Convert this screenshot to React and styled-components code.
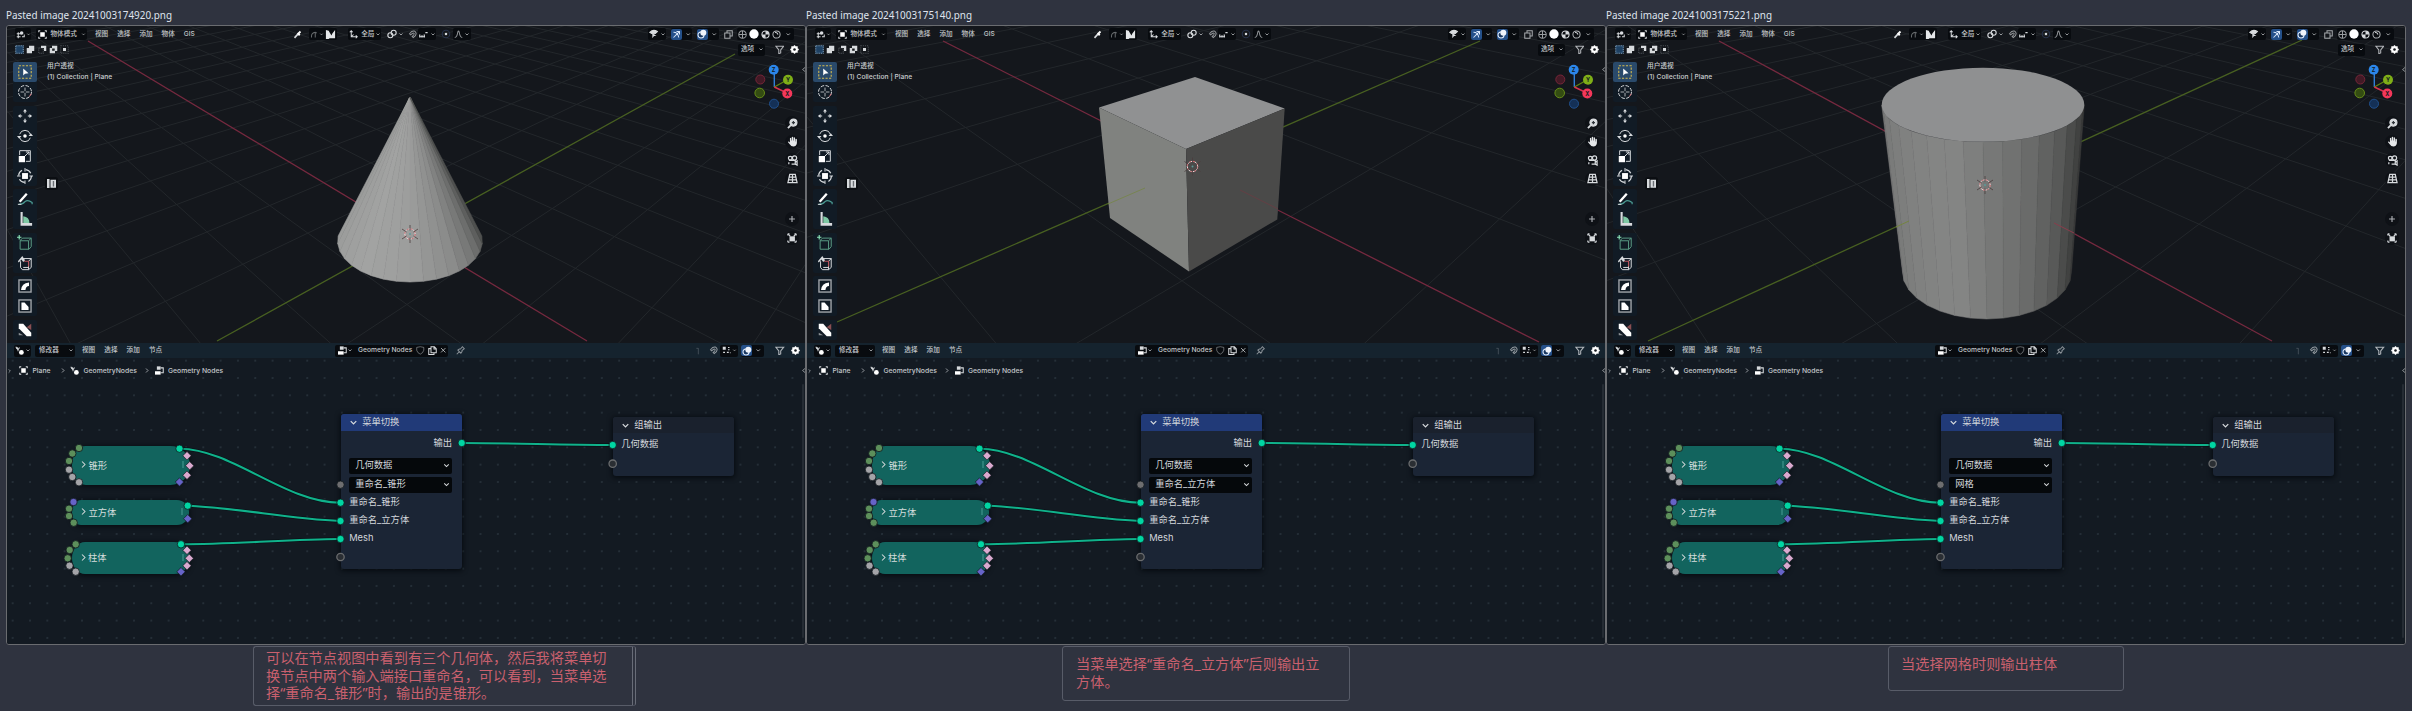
import React from "react";
import styled, { createGlobalStyle } from "styled-components";

const Global = createGlobalStyle`
  body { margin: 0; background: #2f333f; }
  * { box-sizing: border-box; }
`;

const UI = `Inter, "Noto Sans CJK SC", sans-serif`;

const Page = styled.main`
  display: flex;
  width: 2412px;
  height: 711px;
  padding-left: 6px;
  overflow: hidden;
  background: #2f333f;
  font-family: ${UI};
`;
const Column = styled.section`
  display: flex;
  flex-direction: column;
  width: 800px;
  flex: none;
`;
const Title = styled.h2`
  margin: 0;
  height: 25px;
  padding-top: 5px;
  font: 400 9.92px/20px "Noto Sans", sans-serif;
  color: #dfe3ee;
  white-space: nowrap;
`;
const Frame = styled.div`
  display: flex;
  flex-direction: column;
  width: 800px;
  height: 620px;
  border: 1px solid #6a6c70;
  border-radius: 3px;
  overflow: hidden;
  background: #131820;
`;
const Note = styled.p`
  margin: 1px 0 0 ${(p) => p.$left}px;
  width: ${(p) => p.$width}px;
  height: ${(p) => p.$height}px;
  padding: ${(p) => p.$pad};
  border: 1px solid #585c68;
  ${(p) => p.$scroll && "border-right: 4px double #686c77;"}
  border-radius: 3px;
  font: 400 14.2px/17.7px "Noto Sans", "Noto Sans CJK SC", sans-serif;
  color: #c9606e;
  white-space: pre;
`;

/* ---------- 3D viewport ---------- */
const Viewport = styled.div`
  position: relative;
  display: flex;
  flex-direction: column;
  height: 317px;
  flex: none;
  background: #14171c;
`;
const SceneSvg = styled.svg`
  position: absolute;
  inset: 0;
`;
const Bar = styled.div`
  position: relative;
  display: flex;
  align-items: center;
  height: ${(p) => p.$h}px;
  padding-left: ${(p) => p.$start}px;
  background: ${(p) => p.$bg || "transparent"};
  flex: none;
`;
const Slot = styled.span`
  display: flex;
  align-items: center;
  justify-content: ${(p) => (p.$text ? "flex-start" : "center")};
  width: ${(p) => p.$w}px;
  height: 11px;
  margin-left: ${(p) => p.$gap || 0}px;
  flex: none;
  background: ${(p) => p.$bg || "transparent"};
  border-radius: 2px;
  color: ${(p) => p.$color || "#c3c7cb"};
  font-size: ${(p) => p.$size || 6.6}px;
  font-weight: 500;
  line-height: 11px;
  white-space: nowrap;
`;
const Group = styled.span`
  display: flex;
  align-items: center;
  height: 12px;
  width: ${(p) => p.$w}px;
  margin-left: ${(p) => p.$gap || 0}px;
  padding-left: ${(p) => p.$pad || 0}px;
  background: #080b0f;
  border-radius: 2px;
  flex: none;
`;
const Body = styled.div`
  position: relative;
  display: flex;
  justify-content: space-between;
  flex: 1;
  padding: 5px 5px 0 6px;
`;
const Left = styled.div`
  display: flex;
  gap: 10px;
`;
const Tools = styled.div`
  display: flex;
  flex-direction: column;
  gap: 3.6px;
`;
const ToolGroup = styled.div`
  display: flex;
  flex-direction: column;
  width: 24px;
  background: #111b25;
  border-radius: 2px;
`;
const Tool = styled.div`
  display: flex;
  align-items: center;
  justify-content: center;
  height: 20px;
  border-radius: 2px;
  background: ${(p) => (p.$on ? "#2a4a6b" : "transparent")};
`;
const Info = styled.div`
  display: flex;
  flex-direction: column;
  align-items: flex-start;
  margin-top: -1px;
  font-size: 6.7px;
  line-height: 11px;
  font-weight: 500;
  color: #c9cccf;
  white-space: nowrap;
`;
const AssetShelf = styled.div`
  display: flex;
  align-items: center;
  justify-content: center;
  width: 13px;
  height: 13px;
  margin: 94px 0 0 -2px;
  background: #0b0e12;
  border-radius: 3px;
`;
const Right = styled.div`
  display: flex;
  flex-direction: column;
  align-items: flex-end;
  width: 56px;
`;
const NavStack = styled.div`
  display: flex;
  flex-direction: column;
  width: 14px;
  gap: 4.6px;
  margin: 4px 1px 0 0;
`;
const NavButton = styled.div`
  display: flex;
  align-items: center;
  justify-content: center;
  height: 14px;
  margin-top: ${(p) => p.$gap || 0}px;
  border-radius: 7px;
  background: #0e1116;
`;

/* ---------- node editor ---------- */
const Canvas = styled.div`
  position: relative;
  flex: 1;
  background-color: #131a22;
  background-image: radial-gradient(circle at 1px 1px, #252f38 0.7px, transparent 1px);
  background-size: 17.33px 17.33px;
  background-position: 4.7px 1.7px;
`;
const Wires = styled.svg`
  position: absolute;
  inset: 0;
`;
const Crumbs = styled.div`
  position: relative;
  display: flex;
  align-items: center;
  height: 25px;
`;
const Scroll = styled.div`
  position: absolute;
  right: 1px;
  top: 26px;
  bottom: 6px;
  width: 2px;
  border-radius: 1px;
  background: #242b33;
`;
const Node = styled.div`
  position: absolute;
  left: ${(p) => p.$x}px;
  top: ${(p) => p.$y}px;
  width: ${(p) => p.$w}px;
  height: ${(p) => p.$h}px;
  border-radius: 3px;
  background: #1b2535;
  box-shadow: 0 1px 5px 1px rgba(3, 7, 11, 0.75);
  color: #d3d7dc;
  font-size: 9.3px;
  line-height: 18.2px;
  white-space: nowrap;
`;
const NodeHead = styled.div`
  display: flex;
  align-items: center;
  gap: 3px;
  height: ${(p) => p.$h}px;
  padding: 0 0 0 7.5px;
  border-radius: 3px 3px 0 0;
  background: ${(p) => p.$bg};
`;
const Output = styled.div`
  padding: 3px 10px 0 0;
  text-align: right;
`;
const Select = styled.div`
  display: flex;
  align-items: center;
  justify-content: space-between;
  height: 16px;
  margin: ${(p) => p.$mt}px 9.5px 0 8.5px;
  padding: 0 1px 1px 6px;
  border-radius: 2px;
  background: #05080b;
`;
const Inputs = styled.div`
  padding: ${(p) => p.$pt}px 0 0 8.5px;
`;
const Pill = styled.div`
  position: absolute;
  left: ${(p) => p.$x}px;
  top: ${(p) => p.$y}px;
  width: ${(p) => p.$w}px;
  height: ${(p) => p.$h}px;
  display: flex;
  align-items: center;
  gap: 0.5px;
  padding: 0 6px 2px 7px;
  border-radius: ${(p) => p.$r};
  background: #12645e;
  box-shadow: 0 1px 5px 1px rgba(3, 7, 11, 0.7);
  color: #d5dedd;
  font-size: 9.3px;
  white-space: nowrap;
`;
const Grip = styled.i`
  width: 2px;
  height: 7px;
  margin-left: auto;
  background: #2d8079;
`;

/* ---------- icons, drawn on a 12 x 12 field ---------- */
const W = "#d8dbde";
const icons = {
  chev: <path d="M3 4.5 6 7.5 9 4.5" />,
  right: <path d="M4 2 8 6 4 10" />,
  view: <g><path d="M1 5H7M1 9H6M3 3V11" /><circle cx="7.5" cy="4" r="2.4" fill={W} stroke="none" /><path d="M8 9H11V6" /></g>,
  object: <g><rect x="3" y="3" width="6" height="6" fill="#fff" stroke="none" /><path d="M1 3V1H3M9 1H11V3M11 9V11H9M3 11H1V9" /></g>,
  dropper: <g><path d="M2 10.5 6.5 5.5" strokeWidth="2.2" /><path d="M6 4 9 7M7.5 4.5 10 2" strokeWidth="2.6" stroke="#fff" /></g>,
  hook: <path d="M2 10V8Q2 4 7 3L9 4M7 4V10" opacity=".45" />,
  snapN: <path d="M1 1V11H4L5 10H11V1L8 5 7 7 4 2Z" fill="#e4e6e8" stroke="none" />,
  axes: <path d="M3 1V9H11M1 3 3 1 5 3M9 7 11 9 9 11M3 9 6 6" />,
  link: <g><circle cx="4" cy="7.5" r="3" /><circle cx="8" cy="4.5" r="3" /></g>,
  magnet: <path d="M2 5 5 2Q9 0 10.5 3.5 12 7 7 10L5.5 8.5Q9 6 8 4.4 7 3 3.5 6.5Z" opacity=".65" />,
  ruler: <path d="M1 9H8M1 6V10M4 7V10M7 6V10M10 3V4M8.5 3.5H11.5" strokeWidth="1.6" />,
  dot: <g><circle cx="6" cy="6" r="4.5" stroke="#26314a" /><circle cx="6" cy="6" r="1.5" fill={W} stroke="none" /></g>,
  falloff: <path d="M1 10Q4 10 5 3 6 0 7 3 8 10 11 10" opacity=".65" />,
  eye: <g><path d="M1 4Q5 0 10 3L8 5Q5 7 1 4Z" fill={W} /><path d="M4 5V11L6 8.5H9Z" fill={W} stroke="none" /></g>,
  gizmo: <path d="M2 3Q8 3 9 10M2 10 9.5 2.5M6 2H10V6" stroke="#d8e6fa" />,
  overlay: <g><circle cx="4.8" cy="7.2" r="3.6" fill="#17365f" stroke="#dbe8fa" /><circle cx="7.6" cy="4.6" r="3.6" fill="#eef3fb" stroke="none" /></g>,
  xray: <path d="M1 4H8V11H1ZM4 4V1H11V8H8" opacity=".75" />,
  wire: <path d="M6 1A5 5 0 1 0 6 11 5 5 0 1 0 6 1M6 1V11M1 6H11" opacity=".7" />,
  solid: <circle cx="6" cy="6" r="5.6" fill="#fff" stroke="none" />,
  material: <g><circle cx="6" cy="6" r="4.8" /><path d="M6 1.2V6H10.8A5 5 0 0 0 6 1.2ZM6 6H1.2A5 5 0 0 0 6 10.8Z" fill={W} stroke="none" /></g>,
  render: <g><circle cx="6" cy="6" r="4.8" opacity=".8" /><path d="M4 3Q7 3 8 6" /></g>,
  funnel: <path d="M1 1.5H11L7.2 6.2V10L4.8 11V6.2Z" opacity=".8" />,
  gear: <g><circle cx="6" cy="6" r="3.1" stroke="#fff" strokeWidth="3" /><path d="M6 .3V11.7M.3 6H11.7M2 2 10 10M10 2 2 10" stroke="#fff" strokeWidth="1.8" /><circle cx="6" cy="6" r="1.7" fill="#14171c" stroke="none" /></g>,
  selNew: <rect x="1" y="1" width="10" height="10" fill="#1f4163" stroke="#7ca0bf" strokeDasharray="1.4 1" />,
  selAdd: <path d="M1 4H4V1H11V8H8V11H1Z" fill={W} stroke="none" />,
  selSub: <g><path d="M1 4H7V11H1Z" stroke="#50555a" strokeDasharray="1.4 1" /><path d="M4 1H11V8H8V4H4Z" fill={W} stroke="none" /></g>,
  selXor: <path d="M1 4H4V1H11V8H8V11H1ZM4.2 4.5V7.6H7.6V4.5Z" fill={W} fillRule="evenodd" stroke="none" />,
  selAnd: <g><rect x="1" y="1" width="10" height="10" stroke="#4c5156" strokeDasharray="1.4 1.4" /><rect x="4" y="4" width="4" height="4" fill={W} stroke="none" /></g>,
  zoom: <g><circle cx="7" cy="5" r="3.8" fill={W} /><path d="M4.2 7.8 1 11" strokeWidth="2" /><path d="M5.3 5H8.7M7 3.3V6.7" stroke="#30353a" /></g>,
  hand: <path d="M3.2 6V2.4Q4.2 1.6 4.7 2.6V5H5.2V1.2Q6.2.3 6.8 1.4V5H7.3V1.8Q8.2 1 8.8 2V6H9.2V3.5Q10.2 2.6 10.8 3.7V8Q10 11.5 7 11.5 4.4 11.5 3 9L.9 6.5Q1.5 5.2 3.2 7Z" fill="#e5e7e9" stroke="none" />,
  camera: <g><circle cx="3.5" cy="3.4" r="2" /><circle cx="8.2" cy="3.2" r="2.3" /><path d="M2 6H9V10H5M9 8 11 6.5V11L9 10M2 8V10" /></g>,
  persp: <path d="M3 1.5H9L11 10.5H1ZM2.4 4.5H9.6M1.7 7.5H10.3M6 1.5V10.5" />,
  plus: <path d="M6 2.5V9.5M2.5 6H9.5" opacity=".8" />,
  local: <g><path d="M1 1H3M1 1V3M11 1H9M11 1V3M1 11H3M1 11V9M11 11H9M11 11V9M2 2 4 4M10 2 8 4" /><rect x="3" y="4" width="6.5" height="6" fill={W} stroke="none" /></g>,
  asset: <g><path d="M0 0H3.4V12H0ZM4.6 1H12V11.5H4.6Z" fill={W} stroke="none" /><path d="M8.6 2.5V10" stroke="#6a6f74" strokeWidth="1.8" /></g>,
  modifier: <g><path d="M1 1 4 5 6 2M4 5V7" /><circle cx="8.5" cy="8.5" r="3.2" fill="#fff" stroke="none" /><circle cx="3" cy="3" r="1.3" fill={W} stroke="none" /></g>,
  nodes: <g><rect x="2.5" y="0.5" width="5" height="4.5" fill={W} stroke="none" /><rect x="0" y="7" width="7.5" height="4.5" fill="#fff" stroke="none" /><path d="M7.5 2.5H11V9H7.5" /></g>,
  shield: <path d="M1 2Q6 0 11 2V6Q10 10 6 11.5 2 10 1 6Z" opacity=".45" />,
  copy: <path d="M4 1H8.5L11 3.5V9H4ZM4 3.5H1V11.5H8V9M8 1V4H11" />,
  close: <path d="M2 2 10 10M10 2 2 10" />,
  pin: <path d="M1 11 4.5 7.5M2.5 5.5 6.5 9.5 8 7.5 8 6 11 3.5 8.5 1 6 4 4.5 4Z" opacity=".6" />,
  up: <path d="M8 11V2H5" opacity=".25" />,
  snapGrid: <g><rect x="1" y="1" width="4" height="4" fill={W} stroke="none" /><path d="M1.5 8.5H4M6.5 8.5H9M8 2H10M8 5H10M10.5 9H11.5" strokeWidth="1.6" /></g>,
};
const tools = {
  select: <g><rect x="2" y="2" width="14" height="14" stroke="#d5ba4f" strokeDasharray="2.4 1.6" strokeWidth="1.2" /><path d="M7 5V13L9 11 13 10.5Z" fill="#fff" stroke="none" /></g>,
  cursor: <g><circle cx="9" cy="9" r="7.3" strokeDasharray="4 1.7" /><path d="M9 4V8M9 10V14M4 9H8M10 9H14" opacity=".8" /><path d="M14 14 16 11" stroke="#d16b72" /></g>,
  move: <g><path d="M9 5.8V3M9 12.2V15M5.8 9H3M12.2 9H15" strokeWidth="1.3" /><path d="M9 1 11.2 4H6.8ZM9 17 11.2 14H6.8ZM1 9 4 6.8V11.2ZM17 9 14 6.8V11.2Z" fill={W} stroke="none" /></g>,
  rotate: <g><path d="M3 7A6.3 6.3 0 0 1 15 7M15 11A6.3 6.3 0 0 1 3 11" /><circle cx="9" cy="9" r="2" fill="#fff" stroke="none" /><path d="M0 9H5L2.5 12ZM13 9H18L15.5 6Z" fill={W} stroke="none" /></g>,
  scale: <g><path d="M3 8V3H15V15H10M9 9 13.5 4.5M10 4.5H13.5V8" /><rect x="2" y="9" width="7" height="7" fill="#fff" stroke="none" /></g>,
  transform: <g><circle cx="9" cy="9" r="7.2" strokeDasharray="7 4.3" strokeWidth="1.3" /><rect x="5.7" y="5.7" width="6.6" height="6.6" fill="#fff" stroke="none" /><path d="M9 0V4M9 14V18M0 9H4M14 9H18" /></g>,
  annotate: <g><path d="M3 12 11 3" stroke="#fff" strokeWidth="2.6" /><path d="M2 15Q7 15 9 12 12 9 17 13V15" stroke="#4a9a92" strokeWidth="1.4" /><path d="M1 15H5" /></g>,
  measure: <g><path d="M4 1H6.4V13.6H17V16.5H4Z" fill={W} stroke="none" /><path d="M7 6Q14 7 14 13.5H7Z" fill="#7fc9a5" stroke="none" /></g>,
  cube: <g><path d="M3.5 6 6.5 3.5H16V13L13.5 16H3.5ZM3.5 6.5H13V16M13 6.5 16 3.5" stroke="#5b9e86" /><path d="M2.5 0V5M0 2.5H5" stroke="#8be3b7" strokeWidth="1.3" /></g>,
  knife: <g><path d="M4 7V14L6 16.5H13V7M7 14H13M6 4H16V14L13 16.5M13 7 16 4" /><path d="M8 7H13V13" stroke="#b5535c" strokeWidth="1.3" /><path d="M1 7 6 1 9 6 7 8 5 5 2 8.5Z" fill={W} stroke="none" /></g>,
  bevel: <g><rect x="2.2" y="2.2" width="13.6" height="13.6" strokeWidth="1.5" opacity=".75" /><path d="M4.5 13.5Q5 6 13.5 5V9Q10 9 9.5 13.5Z" fill="#fff" stroke="none" /></g>,
  inset: <g><rect x="2.2" y="2.2" width="13.6" height="13.6" strokeWidth="1.5" opacity=".75" /><path d="M5 5H8.5L13 10V13.5H5Z" fill="#fff" stroke="none" /></g>,
  swatch: <g><path d="M2 2H7L16 12V16H11L2 7Z" fill="#fff" stroke="none" /><path d="M11 6 16 2V9Z" fill="#8a4e52" stroke="none" /><path d="M2 12 7 15H2Z" fill="#8a8f93" stroke="none" /></g>,
};

const Drawing = ({ set = icons, box = 12, name, s = 8 }) => (
  <svg width={s} height={s} viewBox={`0 0 ${box} ${box}`} fill="none" stroke={W} strokeWidth={box === 12 ? 1.35 : 1.1}>
    {set[name]}
  </svg>
);

/* One cell of a header bar: an icon or a word. */
const Item = ({ i, t, s, w, gap, bg, color, size }) => (
  <Slot $w={w} $gap={gap} $bg={bg} $color={color} $size={size} $text={!!t}>
    {t || <Drawing name={i} s={s || (i === "chev" ? 6.5 : 9)} />}
  </Slot>
);

const blue = "#24508a";
const ViewHeader = () => (
  <Bar $h={16} $start={8}>
    <Group $w={16}><Item i="view" w={11} /><Item i="chev" w={5} /></Group>
    <Group $gap={5} $w={51}><Item i="object" w={12} /><Item t="物体模式" w={30} gap={2.5} /><Item i="chev" w={5} /></Group>
    {["视图", "选择", "添加", "物体", "GIS"].map((t, n) => (
      <Item key={t} t={t} w={14} gap={n ? 8.2 : 8} />
    ))}
    <Item i="dropper" w={12} gap={93.5} />
    <Group $gap={6} $w={28}><Item i="hook" w={10} /><Item i="chev" w={5} /><Item i="snapN" w={11} s={11} gap={1} /></Group>
    <Group $gap={11} $w={33}><Item i="axes" w={11} /><Item t="全局" w={14} gap={2} /><Item i="chev" w={6} /></Group>
    <Item i="link" w={12} gap={4.5} s={10} /><Item i="chev" w={6} />
    <Item i="magnet" w={11} gap={3} />
    <Group $gap={0} $w={18}><Item i="ruler" w={12} /><Item i="chev" w={6} /></Group>
    <Item i="dot" w={10} gap={5} s={10} />
    <Group $gap={2} $w={18}><Item i="falloff" w={11} /><Item i="chev" w={6} /></Group>
    <Group $gap={177} $w={18}><Item i="eye" w={12} s={10} /><Item i="chev" w={6} /></Group>
    <Group $gap={5} $w={21}><Item i="gizmo" w={11} bg={blue} /><Item i="chev" w={8} gap={2} /></Group>
    <Group $gap={5} $w={22}><Item i="overlay" w={11} bg={blue} s={10} /><Item i="chev" w={8} gap={2} /></Group>
    <Item i="xray" w={11} gap={4} />
    <Group $gap={3} $w={57}>
      <Item i="wire" w={12} /><Item i="solid" w={11} s={10} /><Item i="material" w={11} /><Item i="render" w={12} /><Item i="chev" w={10} />
    </Group>
  </Bar>
);

const Settings = () => (
  <Bar $h={15} $start={7}>
    {["selNew", "selAdd", "selSub", "selXor", "selAnd"].map((n) => <Item key={n} i={n} w={11.3} />)}
    <Group $gap={667.5} $w={27} $pad={3}><Item t="选项" w={17} /><Item i="chev" w={6} /></Group>
    <Item i="funnel" w={12} gap={8.5} s={9.5} /><Item i="gear" w={12} gap={3} s={9} />
  </Bar>
);

const toolGroups = [["select", "cursor"], ["move", "rotate", "scale", "transform"], ["annotate", "measure"], ["cube", "knife"], ["bevel", "inset"], ["swatch"]];

const GizmoLetter = ({ x, y, c, t }) => (
  <g>
    <circle cx={x} cy={y} r="5" fill={c} />
    <text x={x} y={y + 2} textAnchor="middle" fontSize="5.5" fontWeight="700" fontFamily="Inter, sans-serif" fill="#141a20">{t}</text>
  </g>
);
const Gizmo = () => (
  <svg width="50" height="50" viewBox="751 63 50 50" fill="none">
    <path d="M775.3 88V75" stroke="#2f7fd8" strokeWidth="1.4" />
    <path d="M775.3 88 788 81" stroke="#5f8513" strokeWidth="1.4" />
    <path d="M775.3 88 788 94" stroke="#d8324e" strokeWidth="1.4" />
    <circle cx="761.3" cy="80.5" r="4.5" fill="#421a26" stroke="#762638" />
    <circle cx="760.7" cy="94" r="4.8" fill="#344c12" stroke="#668c18" />
    <circle cx="775" cy="104.7" r="4.5" fill="#143056" stroke="#1f4f8c" />
    <GizmoLetter x={774.7} y={70.7} c="#2b86ea" t="Z" />
    <GizmoLetter x={789} y={80.7} c="#7fae17" t="Y" />
    <GizmoLetter x={788.3} y={94.5} c="#f5375a" t="X" />
  </svg>
);

/* ---------- scenes ---------- */
const gridPath = (vp, x0, step) => {
  let d = "";
  for (let k = -40; k <= 40; k++) if (k) d += `M${vp[0]} ${vp[1]}L${x0 + k * step} 341 ${vp[0] + (x0 + k * step - vp[0]) * 3} ${vp[1] + (341 - vp[1]) * 3}`;
  return d;
};
const mix = (a, b, t) => a.map((v, i) => Math.round(v + (b[i] - v) * t));
const ramp = (stops, t) => {
  let n = stops.findIndex((s) => s[0] >= t);
  if (n < 1) n = n === 0 ? 1 : stops.length - 1;
  const [a, b] = [stops[n - 1], stops[n]];
  return `rgb(${mix(a[1], b[1], (t - a[0]) / (b[0] - a[0]))})`;
};
const g = (v) => [v, v + 1, v];

const Cone = () => {
  const n = 18, start = 187, end = -7;
  const stops = [[0, g(154)], [0.3, g(162)], [0.5, g(156)], [0.7, g(138)], [0.85, g(112)], [1, g(72)]];
  const at = (k) => {
    const a = ((start + ((end - start) * k) / n) * Math.PI) / 180;
    return [410 + 72.4 * Math.cos(a), 241 + 41 * Math.sin(a)];
  };
  return [...Array(n)].map((_, k) => {
    const a = at(k), b = at(k + 1), c = ramp(stops, (k + 0.5) / n);
    return <path key={k} d={`M410 97L${a}L${b}Z`} fill={c} stroke={c} strokeWidth=".6" strokeLinejoin="round" />;
  });
};
const Cube = () => (
  <g>
    <path d="M299 107.5 395 77 484.7 108.5 386 149Z" fill="#909192" />
    <path d="M299 107.5 386 149 389 271.5 310 218Z" fill="#80827f" />
    <path d="M386 149 484.7 108.5 477.3 219.5 389 271.5Z" fill="#4a4a49" />
  </g>
);
const Cylinder = () => {
  const n = 16;
  const stops = [[0, g(116)], [0.2, g(128)], [0.4, g(133)], [0.52, g(120)], [0.66, g(106)], [0.78, g(88)], [0.88, g(68)], [1, g(54)]];
  const pt = (k, cx, cy, rx, ry) => {
    const a = Math.PI * (1 - k / n);
    return [cx + rx * Math.cos(a), cy + ry * Math.sin(a)];
  };
  return (
    <g>
      {[...Array(n)].map((_, k) => {
        const c = ramp(stops, (k + 0.5) / n);
        const p = [pt(k, 383, 105, 101.3, 37), pt(k + 1, 383, 105, 101.3, 37), pt(k + 1, 387, 272, 84.5, 47), pt(k, 387, 272, 84.5, 47)];
        return <path key={k} d={`M${p[0]}L${p[1]}L${p[2]}L${p[3]}Z`} fill={c} stroke={c} strokeWidth=".5" strokeLinejoin="round" />;
      })}
      <ellipse cx="383" cy="104.7" rx="101.3" ry="37" fill="#8f9091" />
    </g>
  );
};
const Cursor3D = ({ x, y }) => (
  <g transform={`translate(${x} ${y})`} fill="none">
    <circle r="5.2" stroke="#e9dcdc" strokeWidth="1" />
    <circle r="5.2" stroke="#c0555c" strokeWidth="1" strokeDasharray="2 2.08" />
    <path d="M0-9V-3.5M0 3.5V9M-8-5-3.5-2M3.5 2 8 5M-8 5-3.5 2M3.5-2 8-5" stroke="#4a3c3e" strokeWidth=".8" />
    <circle r="1" fill="#5d9a98" />
  </g>
);

const scenes = {
  cone: {
    vr: [-190, -126], vg: [1064, -129], r0: 587, rs: 129.5, g0: 217, gs: 134.5,
    red: "M88 41 587 341", green: "M217 341 735 54", cursor: [410, 234], Shape: Cone, ghost: null,
  },
  cube: {
    vr: [-201, -132], vg: [1085, -136], r0: 740, rs: 273, g0: -6, gs: 286.5,
    red: "M143 41 739 342", green: "M37 322 680 41", cursor: [392.5, 166.5], Shape: Cube,
    ghost: <g strokeWidth="1"><path d="M308 204 345 188" stroke="#74843f" opacity=".7" /><path d="M440 190 478 209" stroke="#6b3c44" opacity=".8" /></g>,
  },
  cylinder: {
    vr: [-205, -135], vg: [1065, -127], r0: 672, rs: 188.5, g0: 48, gs: 198,
    red: "M119 41 672 341", green: "M48 341 702 40", cursor: [385, 185], Shape: Cylinder,
    ghost: <g strokeWidth="1"><path d="M296 227 309 221" stroke="#74843f" /><path d="M454 223 474 233" stroke="#8b3c4b" /></g>,
  },
};

const Scene = ({ kind }) => {
  const s = scenes[kind];
  return (
    <SceneSvg width="798" height="317" viewBox="7 26 798 317" fill="none">
      <path d={gridPath(s.vr, s.r0, s.rs) + gridPath(s.vg, s.g0, s.gs)} stroke="#23272b" strokeWidth="1" />
      <path d={s.red} stroke="#76293f" strokeWidth="1.3" />
      <path d={s.green} stroke="#486021" strokeWidth="1.3" />
      <s.Shape />
      {s.ghost}
      <Cursor3D x={s.cursor[0]} y={s.cursor[1]} />
      <path d="M805 67.5 802.5 69.5 805 71.5" stroke="#888c90" />
    </SceneSvg>
  );
};

/* ---------- node graph ---------- */
const GREEN = "#5d8f5b", GREY = "#a4a4a8", TEAL = "#00d6a3", PINK = "#d9a9cf", VIOLET = "#6663c7";
const sockets = [
  [79, 448, GREEN], [72.3, 453.5, GREEN], [69, 461, GREEN], [69, 469.7, GREY], [72.3, 477, GREY], [79, 482.3, GREY], [179.5, 448.7, TEAL],
  [73.5, 502, VIOLET], [69, 508.7, GREEN], [69, 516, GREEN], [73.7, 522.7, GREEN], [187.7, 505.7, TEAL],
  [75.7, 544.3, GREEN], [69.7, 550, GREEN], [67.7, 558.3, GREEN], [69.5, 565.7, GREY], [75.7, 571.7, GREY], [181, 544.3, TEAL],
  [340.5, 484.7, "#6e6e70"], [340.5, 502.7, TEAL], [340.5, 521, TEAL], [340.5, 539, TEAL], [461.7, 443, TEAL], [612.7, 445, TEAL],
];
const diamonds = [
  [187, 455.7, PINK], [189.7, 465.7, PINK], [187, 475.3, PINK], [179.5, 482, VIOLET], [187.7, 518.7, VIOLET],
  [187, 550.3, PINK], [189.3, 558.3, PINK], [187, 565.7, PINK], [181, 571.7, VIOLET],
];
const wirePaths = "M180 448.7C232 449 285 502.7 340 502.7M188 505.7C240 508 288 519 340 521M181 544.3C235 544 290 539.5 340 539M462 443C512 443 562 445 612 445";

const NodeGraph = ({ choice }) => (
  <>
    <Wires width="798" height="286" viewBox="7 358 798 286" fill="none">
      <path d={wirePaths} stroke="#0a1218" strokeWidth="3.4" />
      <path d={wirePaths} stroke="#10b28b" strokeWidth="2.1" />
    </Wires>
    <Pill $x={65} $y={88} $w={118} $h={39} $r="14px 20px 20px 14px / 20px"><Drawing name="right" s={9} />锥形<Grip /></Pill>
    <Pill $x={65} $y={142} $w={117} $h={25} $r="9px 12px 12px 9px / 12px"><Drawing name="right" s={9} />立方体<Grip /></Pill>
    <Pill $x={64.5} $y={184} $w={118} $h={32} $r="13px 16px 16px 13px / 16px"><Drawing name="right" s={9} />柱体<Grip /></Pill>
    <Node $x={333.7} $y={56} $w={121.3} $h={155}>
      <NodeHead $h={17} $bg="#213a78"><Drawing name="chev" s={11} />菜单切换</NodeHead>
      <Output>输出</Output>
      <Select $mt={5.8}>几何数据<Drawing name="chev" s={9} /></Select>
      <Select $mt={3}>{choice}<Drawing name="chev" s={9} /></Select>
      <Inputs $pt={0}>
        <div>重命名_锥形</div>
        <div>重命名_立方体</div>
        <div>Mesh</div>
      </Inputs>
    </Node>
    <Node $x={605.7} $y={59} $w={121} $h={59}>
      <NodeHead $h={16} $bg="#1a212d"><Drawing name="chev" s={11} />组输出</NodeHead>
      <Inputs $pt={2}>几何数据</Inputs>
    </Node>
    <Wires width="798" height="286" viewBox="7 358 798 286" fill="none">
      {sockets.map(([x, y, c], k) => <circle key={k} cx={x} cy={y} r="3.7" fill={c} stroke="#10181d" strokeWidth=".8" />)}
      {diamonds.map(([x, y, c], k) => <path key={k} d={`M${x} ${y - 4.2}l4.2 4.2-4.2 4.2-4.2-4.2z`} fill={c} stroke="#10181d" strokeWidth=".7" />)}
      {[[340.5, 557], [612.7, 463.7]].map(([x, y]) => <circle key={x} cx={x} cy={y} r="3.7" fill="#2a2e33" stroke="#6a6c6e" strokeWidth="1.3" />)}
      <path d="M805 368.5 802.5 370.5 805 372.5" stroke="#888c90" />
    </Wires>
  </>
);

const NodeHeader = () => (
  <Bar $h={15} $start={7} $bg="#15232e">
    <Group $w={17}><Item i="modifier" w={11} /><Item i="chev" w={6} /></Group>
    <Group $gap={4} $w={40} $pad={4}><Item t="修改器" w={29} /><Item i="chev" w={6} /></Group>
    {["视图", "选择", "添加", "节点"].map((t, n) => <Item key={t} t={t} w={14} gap={n ? 8.3 : 7} />)}
    <Group $gap={172.2} $w={113} $pad={2}>
      <Item i="nodes" w={10} /><Item i="chev" w={6} />
      <Item t="Geometry Nodes" w={56} gap={5} size={6.7} />
      <Item i="shield" w={11} gap={1} s={8.5} /><Item i="copy" w={11} gap={1} s={9} /><Item i="close" w={9} gap={1} s={6.5} />
    </Group>
    <Item i="pin" w={12} gap={6} s={9} />
    <Item i="up" w={8} gap={227} s={8} />
    <Item i="magnet" w={12} gap={6} />
    <Group $gap={1} $w={18}><Item i="snapGrid" w={12} s={9} /><Item i="chev" w={5} /></Group>
    <Group $gap={3} $w={23}><Item i="overlay" w={11} bg={blue} s={10} /><Item i="chev" w={9} gap={2} /></Group>
    <Item i="funnel" w={12} gap={10} s={9.5} /><Item i="gear" w={12} gap={3} s={9} />
  </Bar>
);

const Breadcrumbs = () => (
  <Crumbs>
    <Item i="right" w={5} s={6} />
    <Item i="object" w={10} gap={6.5} s={9} /><Item t="Plane" w={20} gap={4} size={6.8} />
    <Item i="right" w={6} gap={7} s={7} />
    <Item i="modifier" w={10} gap={4} s={9} /><Item t="GeometryNodes" w={54} gap={4} size={6.8} />
    <Item i="right" w={6} gap={6.5} s={7} />
    <Item i="nodes" w={10} gap={4} s={9} /><Item t="Geometry Nodes" w={56} gap={4} size={6.8} />
  </Crumbs>
);

const Screenshot = ({ kind, choice }) => (
  <Frame>
    <Viewport>
      <Scene kind={kind} />
      <ViewHeader />
      <Settings />
      <Body>
        <Left>
          <Tools>
            {toolGroups.map((names) => (
              <ToolGroup key={names[0]}>
                {names.map((n) => <Tool key={n} $on={n === "select"}><Drawing set={tools} box={18} name={n} s={16} /></Tool>)}
              </ToolGroup>
            ))}
          </Tools>
          <Info>
            <span>用户透视</span>
            <span>(1) Collection | Plane</span>
            <AssetShelf><Drawing name="asset" s={9} /></AssetShelf>
          </Info>
        </Left>
        <Right>
          <Gizmo />
          <NavStack>
            <NavButton><Drawing name="zoom" s={11} /></NavButton>
            <NavButton><Drawing name="hand" s={11} /></NavButton>
            <NavButton><Drawing name="camera" s={11} /></NavButton>
            <NavButton><Drawing name="persp" s={11} /></NavButton>
            <NavButton $gap={22}><Drawing name="plus" s={10} /></NavButton>
            <NavButton><Drawing name="local" s={10} /></NavButton>
          </NavStack>
        </Right>
      </Body>
    </Viewport>
    <NodeHeader />
    <Canvas>
      <Breadcrumbs />
      <NodeGraph choice={choice} />
      <Scroll />
    </Canvas>
  </Frame>
);

const cards = [
  {
    title: "Pasted image 20241003174920.png", kind: "cone", choice: "重命名_锥形",
    note: "可以在节点视图中看到有三个几何体，然后我将菜单切\n换节点中两个输入端接口重命名，可以看到，当菜单选\n择“重命名_锥形”时，输出的是锥形。",
    box: { $left: 247, $width: 383, $height: 60, $pad: "2px 0 0 12px", $scroll: true },
  },
  {
    title: "Pasted image 20241003175140.png", kind: "cube", choice: "重命名_立方体",
    note: "当菜单选择“重命名_立方体”后则输出立\n方体。",
    box: { $left: 256, $width: 288, $height: 55, $pad: "8px 0 0 13px" },
  },
  {
    title: "Pasted image 20241003175221.png", kind: "cylinder", choice: "网格",
    note: "当选择网格时则输出柱体",
    box: { $left: 282, $width: 236, $height: 45, $pad: "8px 0 0 12px" },
  },
];

export default function App() {
  return (
    <Page>
      <Global />
      {cards.map(({ title, kind, choice, note, box }) => (
        <Column key={kind}>
          <Title>{title}</Title>
          <Screenshot kind={kind} choice={choice} />
          <Note {...box}>{note}</Note>
        </Column>
      ))}
    </Page>
  );
}
